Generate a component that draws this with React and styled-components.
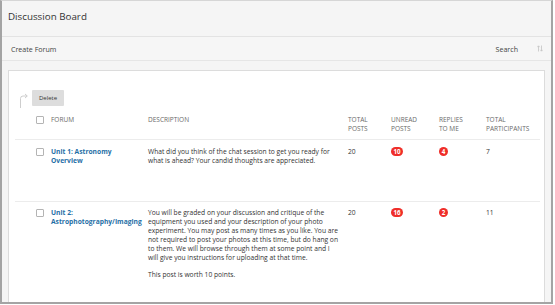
import React from 'react';
import styled, { createGlobalStyle } from 'styled-components';

const forums = [
  {
    id: 1,
    title: 'Unit 1: Astronomy Overview',
    description: [
      [
        'What did you think of the chat session to get you ready for',
        'what is ahead? Your candid thoughts are appreciated.',
      ],
    ],
    total: 20,
    unread: 10,
    replies: 4,
    participants: 7,
  },
  {
    id: 2,
    title: 'Unit 2: Astrophotography/Imaging',
    description: [
      [
        'You will be graded on your discussion and critique of the',
        'equipment you used and your description of your photo',
        'experiment. You may post as many times as you like. You are',
        'not required to post your photos at this time, but do hang on',
        'to them. We will browse through them at some point and I',
        'will give you instructions for uploading at that time.',
      ],
      ['This post is worth 10 points.'],
    ],
    total: 20,
    unread: 16,
    replies: 2,
    participants: 11,
  },
];

export default function App() {
  return (
    <>
      <GlobalStyle />
      <Frame>
        <PageHeader>
          <Title>Discussion Board</Title>
        </PageHeader>
        <Toolbar>
          <ToolLink>Create Forum</ToolLink>
          <ToolRight>
            <ToolLink>Search</ToolLink>
            <SortIcon viewBox="0 0 6 7">
              <path d="M1.5 6.5V1M0.3 2.2L1.5 0.8L2.7 2.2M4.5 0.5V6M3.3 4.8L4.5 6.2L5.7 4.8" />
            </SortIcon>
          </ToolRight>
        </Toolbar>
        <Panel>
          <ActionBar>
            <SelectArrow viewBox="0 0 10 15">
              <path d="M2.5 15V5.5Q2.5 3 5 3H9" />
              <path d="M7 1L9.3 3L7 5" />
            </SelectArrow>
            <Button>Delete</Button>
          </ActionBar>
          <Table>
            <HeadRow>
              <span />
              <Checkbox />
              <HeadCell>Forum</HeadCell>
              <HeadCell>Description</HeadCell>
              <HeadCell>Total<br />Posts</HeadCell>
              <HeadCell>Unread<br />Posts</HeadCell>
              <HeadCell>Replies<br />To Me</HeadCell>
              <HeadCell>Total<br />Participants</HeadCell>
            </HeadRow>
            {forums.map((f) => (
              <Row key={f.id}>
                <span />
                <Checkbox />
                <ForumLink>{f.title}</ForumLink>
                <Description>
                  {f.description.map((lines, i) => (
                    <p key={i}>
                      {lines.map((line, j) => (
                        <React.Fragment key={j}>
                          {j > 0 && <br />}
                          {line}
                        </React.Fragment>
                      ))}
                    </p>
                  ))}
                </Description>
                <Cell>{f.total}</Cell>
                <Cell><Badge>{f.unread}</Badge></Cell>
                <Cell><Badge>{f.replies}</Badge></Cell>
                <Cell>{f.participants}</Cell>
              </Row>
            ))}
          </Table>
        </Panel>
      </Frame>
    </>
  );
}

const GlobalStyle = createGlobalStyle`
  body {
    margin: 0;
    background: #ffffff;
    font-family: 'Open Sans', 'Liberation Sans', sans-serif;
    color: #333333;
  }
`;

const Frame = styled.div`
  box-sizing: border-box;
  width: 553px;
  height: 304px;
  display: flex;
  flex-direction: column;
  overflow: hidden;
  background: #f5f5f5;
  border: 2px solid #a4a4a4;
  border-top: 1px solid #d6d6d6;
`;

const PageHeader = styled.header`
  flex-shrink: 0;
  height: 36px;
  display: flex;
  align-items: center;
  padding: 0 0 4px 6px;
  box-sizing: border-box;
  border-bottom: 1px solid #e3e3e3;
`;

const Title = styled.h1`
  margin: 0;
  font-size: 9.8px;
  font-weight: 400;
  color: #333333;
`;

const Toolbar = styled.nav`
  flex-shrink: 0;
  height: 24px;
  display: flex;
  align-items: center;
  justify-content: space-between;
  padding: 0 8px 0 9px;
  box-sizing: border-box;
  border-bottom: 1px solid #e6e6e6;
  background: #f6f6f6;
`;

const ToolRight = styled.div`
  display: flex;
  align-items: center;
  gap: 19px;
`;

const ToolLink = styled.span`
  font-size: 7.1px;
  color: #444444;
`;

const SortIcon = styled.svg`
  width: 6px;
  height: 7px;
  fill: none;
  stroke: #c4c4c4;
  stroke-width: 0.8;
`;

const Panel = styled.main`
  flex: 1;
  margin: 9px 6px 0;
  background: #ffffff;
  border: 1px solid #dcdcdc;
  border-bottom: none;
`;

const ActionBar = styled.div`
  display: flex;
  align-items: flex-end;
  gap: 4px;
  padding: 19px 0 0 9px;
`;

const SelectArrow = styled.svg`
  width: 10px;
  height: 15px;
  margin-bottom: -2px;
  fill: none;
  stroke: #c8c8c8;
  stroke-width: 0.9;
`;

const Button = styled.button`
  width: 32px;
  height: 16px;
  padding: 0;
  border: none;
  border-radius: 1px;
  background: #dddddd;
  font-family: inherit;
  font-size: 6px;
  color: #333333;
`;

const Table = styled.div`
  margin: 9px 4px 0 6px;
`;

const Grid = styled.div`
  display: grid;
  grid-template-columns: 21px 15px 97px 200px 43px 48px 47px 54px;
  align-items: start;
  line-height: 9px;
`;

const HeadRow = styled(Grid)`
  padding-bottom: 6px;
  border-bottom: 1px solid #ececec;
`;

const Row = styled(Grid)`
  padding: 6.5px 0 36px;
  border-bottom: 1px solid #ececec;
  font-size: 6.7px;
`;

const HeadCell = styled.div`
  font-size: 6.5px;
  text-transform: uppercase;
  color: #6a6a6a;
`;

const Checkbox = styled.span`
  width: 6px;
  height: 6px;
  margin-top: 1px;
  border: 1px solid #b4b4b4;
  border-radius: 1px;
  background: #ffffff;
`;

const ForumLink = styled.a`
  max-width: 92px;
  font-size: 6.7px;
  font-weight: 700;
  color: #1f6fa6;
`;

const Description = styled.div`
  white-space: nowrap;
  color: #333333;

  p {
    margin: 0 0 7.5px;
  }

  p:last-child {
    margin-bottom: 0;
  }
`;

const Cell = styled.div`
  color: #333333;
`;

const Badge = styled.span`
  display: inline-flex;
  align-items: center;
  justify-content: center;
  min-width: 9px;
  height: 9px;
  padding: 0 2.5px;
  box-sizing: border-box;
  border-radius: 5px;
  background: #ef2e29;
  color: #ffffff;
  font-size: 6.2px;
  font-weight: 700;
`;
